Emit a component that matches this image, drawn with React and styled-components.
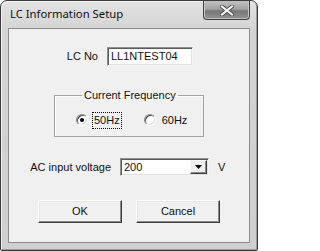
import styled, { createGlobalStyle } from 'styled-components';

const Global = createGlobalStyle`
  html, body { margin: 0; padding: 0; background: #ffffff; }
  * { box-sizing: border-box; }
`;

const Window = styled.div`
  width: 258px;
  height: 251px;
  display: flex;
  flex-direction: column;
  border: 1px solid #3a3a3a;
  border-radius: 7px 7px 2px 2px;
  background: linear-gradient(to bottom, #e2e2e2 0px, #d4d4d4 28px, #cfcfcf 100%);
  box-shadow: inset 1px 1px 0 #f4f4f4, inset -1px -1px 0 #9a9a9a;
  overflow: hidden;
`;

const TitleBar = styled.div`
  height: 27px;
  flex: none;
  display: flex;
  align-items: flex-start;
  padding-left: 9px;
`;

const Title = styled.span`
  font-family: "Noto Sans", "Open Sans", sans-serif;
  font-size: 11.3px;
  line-height: 26px;
  color: #111;
`;

const CloseButton = styled.div`
  margin-left: auto;
  margin-right: 7px;
  width: 47px;
  height: 19px;
  display: flex;
  align-items: center;
  justify-content: center;
  border: 1px solid #3f3f3f;
  border-top: none;
  border-radius: 0 0 4px 4px;
  background: linear-gradient(to bottom, #c0c0c0 0%, #a2a2a2 45%, #777777 55%, #929292 100%);
  box-shadow: inset 0 -1px 0 #bdbdbd, inset 1px 0 0 #c8c8c8, inset -1px 0 0 #c8c8c8;
`;

const Client = styled.div`
  flex: 1;
  margin: 0 7px 7px;
  border: 1px solid #8c8c8c;
  background: #f0f0f0;
  display: flex;
  flex-direction: column;
  font-family: "Liberation Sans", Arial, sans-serif;
  font-size: 11px;
  color: #111;
`;

const FieldRow = styled.div`
  display: grid;
  grid-template-columns: ${(p) => p.$labelWidth}px auto auto;
  column-gap: ${(p) => p.$gap}px;
  align-items: center;
  justify-content: start;
  margin-top: ${(p) => p.$top}px;
`;

const Label = styled.span`
  text-align: right;
  line-height: 13px;
  white-space: nowrap;
`;

const Sunken = styled.div`
  width: ${(p) => p.$width}px;
  height: ${(p) => p.$height}px;
  background: #fff;
  border: 1px solid;
  border-color: #8e8e8e #f4f4f4 #f4f4f4 #8e8e8e;
  box-shadow: inset 1px 1px 0 #5a5a5a, inset -1px -1px 0 #e0e0e0;
  display: flex;
  align-items: center;
  padding-left: 3px;
  line-height: 13px;
`;

const DropButton = styled.div`
  margin-left: auto;
  margin-right: 1px;
  width: 17px;
  height: 14px;
  background: #f0f0f0;
  border: 1px solid;
  border-color: #f8f8f8 #404040 #404040 #f8f8f8;
  box-shadow: inset -1px -1px 0 #888;
  display: flex;
  align-items: center;
  justify-content: center;
`;

const GroupBox = styled.fieldset`
  margin: 23px 0 0 45px;
  width: 150px;
  height: 48px;
  padding: 10px 0 0 21px;
  border: 1px solid #a2a2a2;
  box-shadow: 1px 1px 0 #ffffff inset;
  display: flex;
  gap: 23px;
`;

const Legend = styled.legend`
  margin-left: 6px;
  padding: 0 2px;
  line-height: 13px;
`;

const Radio = styled.label`
  display: flex;
  align-items: center;
  gap: 5px;
  height: 16px;
`;

const RadioCircle = styled.span`
  width: 12px;
  height: 12px;
  border-radius: 50%;
  border: 1px solid;
  border-color: #8a8a8a #fbfbfb #fbfbfb #8a8a8a;
  box-shadow: inset 1px 1px 0 #505050, inset -1px -1px 0 #dcdcdc;
  background: #fff;
  display: flex;
  align-items: center;
  justify-content: center;
  &::after {
    content: '';
    width: 4px;
    height: 4px;
    border-radius: 50%;
    background: ${(p) => (p.$checked ? '#000' : 'transparent')};
  }
`;

const RadioText = styled.span`
  padding: 1px 1px;
  line-height: 13px;
  outline: ${(p) => (p.$focused ? '1px dotted #000' : 'none')};
`;

const ButtonRow = styled.div`
  display: flex;
  gap: 14px;
  margin-top: 24px;
  padding-left: 29px;
`;

const Button = styled.div`
  width: 84px;
  height: 23px;
  display: flex;
  align-items: center;
  justify-content: center;
  background: #f0f0f0;
  border: 1px solid;
  border-color: #ffffff #3c3c3c #3c3c3c #ffffff;
  box-shadow: inset -1px -1px 0 #8a8a8a, inset 1px 1px 0 #e6e6e6;
  line-height: 13px;
`;

function CloseGlyph() {
  return (
    <svg width="14" height="11" viewBox="0 0 14 11">
      <path d="M2 1.5 L12 9.5 M12 1.5 L2 9.5" stroke="#4a4a4a" strokeWidth="4" strokeLinecap="square" />
      <path d="M2 1.5 L12 9.5 M12 1.5 L2 9.5" stroke="#f2f2f2" strokeWidth="2.2" strokeLinecap="square" />
    </svg>
  );
}

function App() {
  return (
    <>
      <Global />
      <Window>
        <TitleBar>
          <Title>LC Information Setup</Title>
          <CloseButton>
            <CloseGlyph />
          </CloseButton>
        </TitleBar>
        <Client>
          <FieldRow $labelWidth={89} $gap={9} $top={18}>
            <Label>LC No</Label>
            <Sunken $width={86} $height={19}>LL1NTEST04</Sunken>
          </FieldRow>

          <GroupBox>
            <Legend>Current Frequency</Legend>
            <Radio>
              <RadioCircle $checked />
              <RadioText $focused>50Hz</RadioText>
            </Radio>
            <Radio>
              <RadioCircle />
              <RadioText>60Hz</RadioText>
            </Radio>
          </GroupBox>

          <FieldRow $labelWidth={102} $gap={9} $top={21}>
            <Label>AC input voltage</Label>
            <Sunken $width={89} $height={18}>
              200
              <DropButton>
                <svg width="7" height="4" viewBox="0 0 7 4">
                  <path d="M0 0 H7 L3.5 4 Z" fill="#000" />
                </svg>
              </DropButton>
            </Sunken>
            <Label>V</Label>
          </FieldRow>

          <ButtonRow>
            <Button>OK</Button>
            <Button>Cancel</Button>
          </ButtonRow>
        </Client>
      </Window>
    </>
  );
}

export default App;
